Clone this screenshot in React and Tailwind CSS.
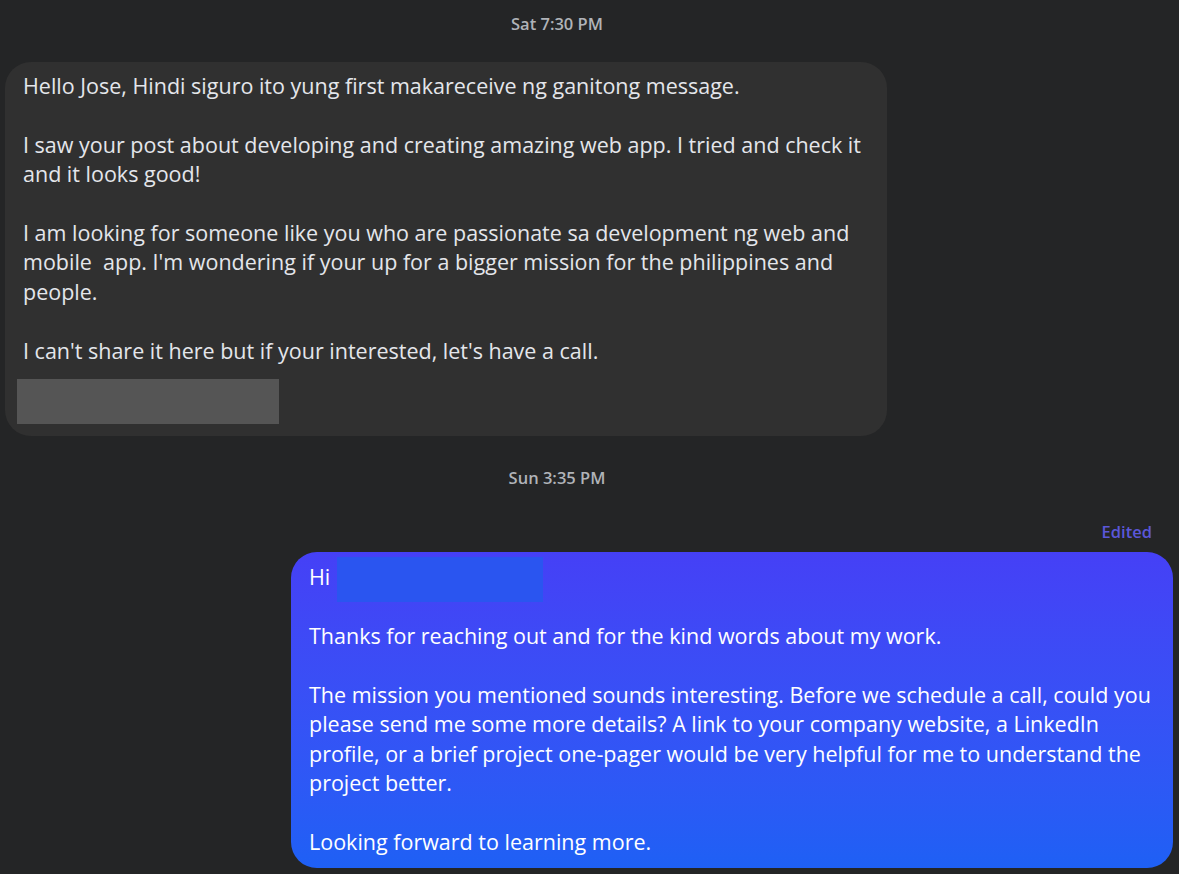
import React from "react";

const font = { fontFamily: '"Open Sans", "Noto Sans", Arial, sans-serif' };

const Stamp = ({ children }) => (
    <div className="flex justify-center pr-[65px]">
        <span className="text-[16.5px] font-semibold text-[#b0b3b8] leading-5">{children}</span>
    </div>
);

const App = () => {
    return (
        <div
            className="w-[1179px] h-[874px] bg-[#242526] text-[#e4e6eb] overflow-hidden"
            style={font}
        >
            {/* Saturday */}
            <div className="pt-[14px]">
                <Stamp>Sat 7:30 PM</Stamp>
            </div>

            {/* Received message */}
            <div className="mt-[28px] ml-[5px] w-[882px] rounded-[26px] bg-[#303030] pl-[18px] pr-4 pt-[9px] pb-[12px]">
                <div className="text-[21.5px] leading-[29.4px] whitespace-nowrap">
                    <p>Hello Jose, Hindi siguro ito yung first makareceive ng ganitong message.</p>
                    <br />
                    <p>
                        I saw your post about developing and creating amazing web app. I tried and check it
                        <br />
                        and it looks good!
                    </p>
                    <br />
                    <p>
                        I am looking for someone like you who are passionate sa development ng web and
                        <br />
                        mobile&nbsp; app. I'm wondering if your up for a bigger mission for the philippines and
                        <br />
                        people.
                    </p>
                    <br />
                    <p>I can't share it here but if your interested, let's have a call.</p>
                </div>
                <div className="mt-[14px] -ml-[6px] w-[262px] h-[45px] bg-[#555555]" />
            </div>

            {/* Sunday */}
            <div className="pt-[32px]">
                <Stamp>Sun 3:35 PM</Stamp>
            </div>

            {/* Sent message */}
            <div className="mt-[34px] flex flex-col items-end pr-[6px]">
                <span className="pr-[21px] text-[16.5px] font-semibold leading-5 text-[#5b57d9]">Edited</span>
                <div className="mt-[10px] w-[882px] rounded-[26px] bg-gradient-to-b from-[#4540f6] to-[#1e60f5] pl-[18px] pr-4 pt-[10px] pb-[12px] text-white">
                    <div className="text-[21.5px] leading-[29.4px] whitespace-nowrap">
                        <p>
                            Hi{" "}
                            <span className="relative inline-block align-top">
                                .
                                <span className="absolute left-[1px] top-[-5px] w-[206px] h-[45px] bg-[#2a55f0]" />
                            </span>
                        </p>
                        <br />
                        <p>Thanks for reaching out and for the kind words about my work.</p>
                        <br />
                        <p>
                            The mission you mentioned sounds interesting. Before we schedule a call, could you
                            <br />
                            please send me some more details? A link to your company website, a LinkedIn
                            <br />
                            profile, or a brief project one-pager would be very helpful for me to understand the
                            <br />
                            project better.
                        </p>
                        <br />
                        <p>Looking forward to learning more.</p>
                    </div>
                </div>
            </div>
        </div>
    );
};

export default App;
